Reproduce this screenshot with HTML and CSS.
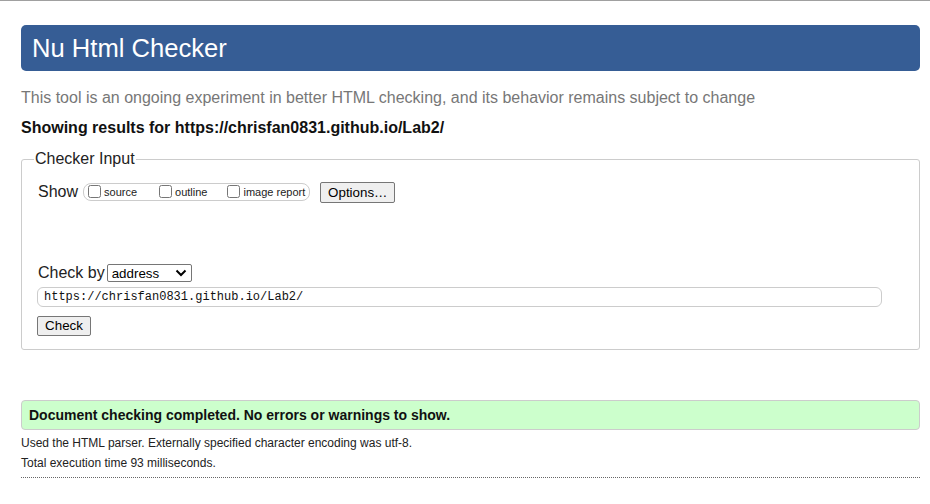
FILE: index.html
```html
<!DOCTYPE html>
<html lang="en">
<head>
<meta charset="utf-8">
<title>Nu Html Checker</title>
<link rel="stylesheet" href="styles.css">
</head>
<body>
<div class="topline"></div>
<main class="page">
  <h1 class="banner">Nu Html Checker</h1>
  <p class="intro">This tool is an ongoing experiment in better HTML checking, and its behavior remains subject to change</p>
  <p class="results-for">Showing results for https://chrisfan0831.github.io/Lab2/</p>
  <fieldset class="checker">
    <legend>Checker Input</legend>
    <div class="show-row">
      <span class="show-label">Show</span>
      <span class="show-group">
        <label class="opt opt-source"><input type="checkbox">source</label>
        <label class="opt opt-outline"><input type="checkbox">outline</label>
        <label class="opt"><input type="checkbox">image report</label>
      </span>
      <button class="btn btn-options" type="button">Options…</button>
    </div>
    <div class="checkby-row">
      <span class="checkby-label">Check by</span>
      <span class="select">address<svg class="chev" width="12" height="8" viewBox="0 0 12 8"><path d="M1.5 1.5 L6 6 L10.5 1.5" fill="none" stroke="#000" stroke-width="2"/></svg></span>
    </div>
    <div class="url">https://chrisfan0831.github.io/Lab2/</div>
    <button class="btn btn-check" type="button">Check</button>
  </fieldset>
  <div class="success">Document checking completed. No errors or warnings to show.</div>
  <p class="details">Used the HTML parser. Externally specified character encoding was utf-8.</p>
  <p class="details">Total execution time 93 milliseconds.</p>
  <hr class="dotted">
</main>
</body>
</html>
```
FILE: styles.css
```css
html, body {
  margin: 0;
  padding: 0;
  background: #fff;
}
body {
  font-family: "Liberation Sans", Arial, sans-serif;
  color: #000;
}
.topline {
  height: 1px;
  background: #a0a0a0;
}
.page {
  margin: 0 10px 0 21px;
  padding-top: 24px;
}
.banner {
  margin: 0;
  height: 46px;
  box-sizing: border-box;
  padding: 0 11px;
  background: #365d95;
  color: #fff;
  border-radius: 5px;
  font-weight: normal;
  font-size: 25.6px;
  line-height: 46px;
}
.intro {
  margin: 17px 0 0;
  color: #777;
  font-size: 16px;
  line-height: 20px;
}
.results-for {
  margin: 10px 0 0;
  font-weight: bold;
  font-size: 16px;
  line-height: 20px;
  color: #111;
}
.checker {
  margin: 11px 0 0;
  padding: 0 0 13px 16px;
  border: 1px solid #ccc;
  border-radius: 3px;
  min-inline-size: 0;
}
.checker legend {
  padding: 0 1px;
  margin-left: -4px;
  font-size: 16px;
  line-height: 20px;
  color: #222;
}
.show-row {
  display: flex;
  align-items: center;
  margin-top: 11px;
  height: 24px;
}
.show-label {
  font-size: 16px;
  color: #222;
  margin-right: 5px;
}
.show-group {
  display: inline-flex;
  align-items: center;
  height: 18px;
  box-sizing: border-box;
  border: 1px solid #ccc;
  border-radius: 8px;
  padding: 0 4px 0 2px;
  font-size: 11px;
  color: #222;
}
.opt {
  display: inline-flex;
  align-items: center;
}
.opt input {
  width: 13px;
  height: 13px;
  margin: 0 3px 1px 2px;
}
.opt-source { margin-right: 20px; }
.opt-outline { margin-right: 18px; }
.btn {
  font-family: "Liberation Sans", Arial, sans-serif;
  font-size: 13.33px;
  background: #efefef;
  color: #000;
  border: 1px solid #767676;
  border-radius: 2px;
  padding: 0 6px;
  height: 21px;
  line-height: 19px;
}
.btn-options {
  margin-left: 10px;
  width: 75px;
}
.checkby-row {
  display: flex;
  align-items: center;
  margin-top: 59px;
  height: 20px;
}
.checkby-label {
  font-size: 16px;
  color: #222;
  margin-right: 2px;
}
.select {
  display: inline-flex;
  align-items: center;
  justify-content: space-between;
  box-sizing: border-box;
  width: 85px;
  height: 18px;
  border: 1px solid #767676;
  border-radius: 2px;
  padding: 0 4px 0 4px;
  font-size: 13.33px;
}
.chev { flex: none; }
.url {
  margin: 4px 0 0 -1px;
  width: 845px;
  height: 20px;
  box-sizing: border-box;
  border: 1px solid #ccc;
  border-radius: 6px;
  padding: 0 6px;
  font-family: "Liberation Mono", "DejaVu Sans Mono", monospace;
  font-size: 12px;
  line-height: 18px;
  color: #111;
}
.btn-check {
  display: block;
  margin: 9px 0 0 -1px;
  width: 54px;
  height: 20px;
  line-height: 18px;
  padding: 0;
}
.success {
  margin-top: 50px;
  height: 30px;
  box-sizing: border-box;
  background: #ccffcc;
  border: 1px solid #ccc;
  border-radius: 4px;
  padding: 0 7px;
  font-weight: bold;
  font-size: 14px;
  line-height: 28px;
  color: #111;
}
.details {
  margin: 6px 0 0;
  font-size: 12px;
  line-height: 15px;
  color: #222;
}
.details + .details {
  margin-top: 5px;
}
.dotted {
  margin: 6px 0 0;
  border: 0;
  border-top: 1px dotted #666;
  height: 0;
}
```
